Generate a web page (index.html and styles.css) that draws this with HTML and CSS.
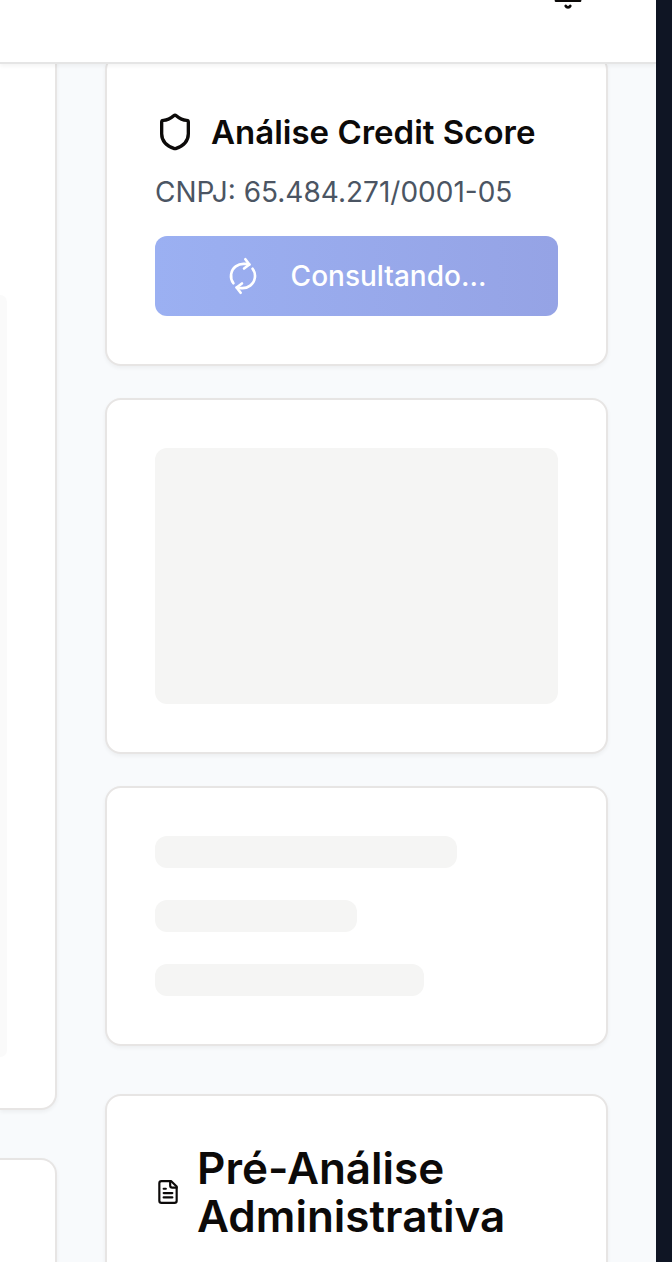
FILE: index.html
```html
<!DOCTYPE html>
<html lang="pt-BR">
<head>
<meta charset="utf-8">
<meta name="viewport" content="width=device-width, initial-scale=1">
<title>Análise Credit Score</title>
<link rel="stylesheet" href="styles.css">
</head>
<body>
<div class="app">
  <div class="page">
    <header class="topbar">
      <button class="bell" type="button" aria-label="Notificações">
        <svg class="icon icon-bell" viewBox="0 0 24 24"><path d="M6 8a6 6 0 0 1 12 0c0 7 3 9 3 9H3s3-2 3-9"/><path d="M10.3 21a1.94 1.94 0 0 0 3.4 0"/></svg>
      </button>
    </header>
    <main class="content">
      <div class="details">
        <section class="panel panel-main"><div class="well"></div></section>
        <section class="panel panel-next"></section>
      </div>
      <aside class="side">
        <section class="card card-score">
          <h3 class="score-title">
            <svg class="icon icon-shield" viewBox="0 0 24 24" aria-hidden="true"><path d="M20 13c0 5-3.5 7.5-7.66 8.95a1 1 0 0 1-.67-.01C7.5 20.5 4 18 4 13V6a1 1 0 0 1 1-1c2 0 4.5-1.2 6.24-2.72a1.17 1.17 0 0 1 1.52 0C14.51 3.81 17 5 19 5a1 1 0 0 1 1 1z"/></svg>
            <span>Análise Credit Score</span>
          </h3>
          <p class="cnpj">CNPJ: 65.484.271/0001-05</p>
          <button class="consult" type="button" disabled>
            <svg class="icon icon-refresh" viewBox="0 0 24 24" aria-hidden="true"><path d="M3 12a9 9 0 0 1 9-9 9.75 9.75 0 0 1 6.74 2.74L21 8"/><path d="M21 3v5h-5"/><path d="M21 12a9 9 0 0 1-9 9 9.75 9.75 0 0 1-6.74-2.74L3 16"/><path d="M8 16H3v5"/></svg>
            <span>Consultando...</span>
          </button>
        </section>
        <section class="card"><div class="skeleton skeleton-block"></div></section>
        <section class="card card-lines">
          <div class="skeleton line line-long"></div>
          <div class="skeleton line line-short"></div>
          <div class="skeleton line line-medium"></div>
        </section>
        <section class="card card-admin">
          <h2 class="admin-title">
            <svg class="icon icon-file" viewBox="0 0 24 24" aria-hidden="true"><path d="M15 2H6a2 2 0 0 0-2 2v16a2 2 0 0 0 2 2h12a2 2 0 0 0 2-2V7Z"/><path d="M14 2v4a2 2 0 0 0 2 2h4"/><path d="M10 9H8"/><path d="M16 13H8"/><path d="M16 17H8"/></svg>
            <span>Pré-Análise Administrativa</span>
          </h2>
        </section>
      </aside>
    </main>
  </div>
  <div class="edge"></div>
</div>
</body>
</html>
```
FILE: styles.css
```css
* { box-sizing: border-box; margin: 0; }

body {
  font-family: Inter, "Liberation Sans", sans-serif;
  color: #0c0a09;
  background: #f8fafc;
}

.app {
  display: flex;
  height: 100vh;
  overflow: hidden;
}

.page { flex: 1; min-width: 0; }
.edge { width: 16px; background: #0f1524; }

.icon {
  display: block;
  flex: none;
  fill: none;
  stroke: currentColor;
  stroke-width: 2;
  stroke-linecap: round;
  stroke-linejoin: round;
}

.topbar {
  position: relative;
  z-index: 1;
  display: flex;
  align-items: flex-end;
  justify-content: flex-end;
  height: 64px;
  padding: 0 72px 52px 0;
  background: #fff;
  border-bottom: 2px solid #e5e5e5;
  box-shadow: 0 2px 4px rgba(0, 0, 0, 0.05);
}

.bell {
  padding: 0;
  border: 0;
  background: none;
  color: inherit;
}
.icon-bell { width: 32px; height: 32px; }

.content {
  display: grid;
  grid-template-columns: 57px minmax(0, 1fr);
  gap: 48px;
  margin-top: -10px;
  padding-right: 48px;
}

.details { display: flex; flex-direction: column; gap: 48px; }

.panel, .card {
  background: #fff;
  border: 2px solid #e7e5e4;
  box-shadow: 0 2px 4px rgba(0, 0, 0, 0.05);
}

.panel { border-left: 0; border-radius: 0 16px 16px 0; }
.panel-main { margin-top: -16px; padding: 255px 48px 51px 0; }
.panel-next { min-height: 240px; }
.well {
  height: 762px;
  background: #fafafa;
  border-radius: 0 12px 12px 0;
}

.side { display: flex; flex-direction: column; gap: 32px; }
.card { padding: 48px; border-radius: 16px; }

.score-title {
  display: flex;
  align-items: center;
  gap: 16px;
  height: 56px;
  font-size: 33px;
  font-weight: 600;
  line-height: 40px;
  white-space: nowrap;
}
.icon-shield { width: 40px; height: 40px; }

.cnpj {
  margin: 12px 0 24px;
  font-size: 28px;
  line-height: 40px;
  color: #4b5563;
  white-space: nowrap;
}

.consult {
  display: flex;
  align-items: center;
  justify-content: center;
  gap: 32px;
  width: 100%;
  height: 80px;
  border: 0;
  border-radius: 12px;
  background: linear-gradient(90deg, #9bb0f2, #95a3e5);
  color: #fff;
  font: 500 28px/40px Inter, "Liberation Sans", sans-serif;
}
.icon-refresh { width: 32px; height: 32px; transform: rotate(-37deg); }

.skeleton { background: #f5f5f4; border-radius: 12px; }
.skeleton-block { height: 256px; }

.card-lines { display: flex; flex-direction: column; gap: 32px; }
.line { height: 32px; }
.line-long { width: 75%; }
.line-short { width: 50%; }
.line-medium { width: 66.6667%; }

.card-admin { margin-top: 16px; }
.admin-title {
  display: flex;
  align-items: center;
  gap: 16px;
  font-size: 44px;
  font-weight: 600;
  line-height: 48px;
}
.icon-file { width: 26px; height: 26px; }
```
